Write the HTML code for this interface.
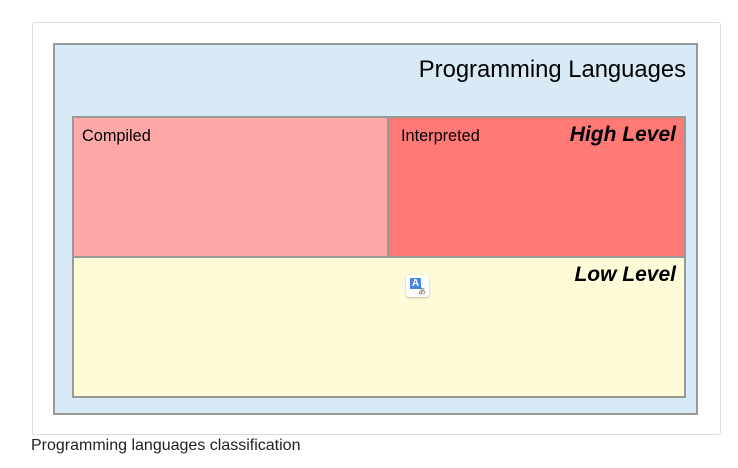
<!DOCTYPE html>
<html><head><style>
body{margin:0;width:738px;height:468px;background:#fff;font-family:"Liberation Sans",sans-serif;position:relative;overflow:hidden}
.a{position:absolute;box-sizing:border-box}
</style></head><body>
<div class="a" style="left:32px;top:22px;width:689px;height:413px;border:1px solid #dcdcdc;border-radius:3px"></div>
<div class="a" style="left:53px;top:43px;width:645px;height:372px;background:#d7eaf6;border:2px solid #999"></div>
<div class="a" style="left:380px;top:56px;width:306px;text-align:right;font-size:23.8px;color:#000">Programming Languages</div>
<div class="a" style="left:72px;top:116px;width:317px;height:142px;background:#ffa8a8;border:2px solid #999"></div>
<div class="a" style="left:387px;top:116px;width:299px;height:142px;background:#ff7a77;border:2px solid #999"></div>
<div class="a" style="left:72px;top:256px;width:614px;height:142px;background:#fefbd8;border:2px solid #999"></div>
<div class="a" style="left:82px;top:127px;font-size:16.3px">Compiled</div>
<div class="a" style="left:401px;top:127px;font-size:16.3px">Interpreted</div>
<div class="a" style="left:480px;top:123px;width:196px;text-align:right;font-size:21px;font-weight:bold;font-style:italic">High Level</div>
<div class="a" style="left:470px;top:263px;width:206px;text-align:right;font-size:21px;font-weight:bold;font-style:italic">Low Level</div>
<div class="a" style="left:406px;top:275px;width:23px;height:22px;background:#fff;border-radius:3px;box-shadow:0 1px 2px rgba(0,0,0,.25)">
<div class="a" style="left:4px;top:3px;width:11px;height:11px;background:#4a86e8;color:#fff;font-size:10px;font-weight:bold;text-align:center;line-height:11px">A</div>
<div class="a" style="left:12px;top:11px;font-size:8px;color:#666">あ</div></div>
<div class="a" style="left:31px;top:437px;font-size:16px;color:#222">Programming languages classification</div>
</body></html>
